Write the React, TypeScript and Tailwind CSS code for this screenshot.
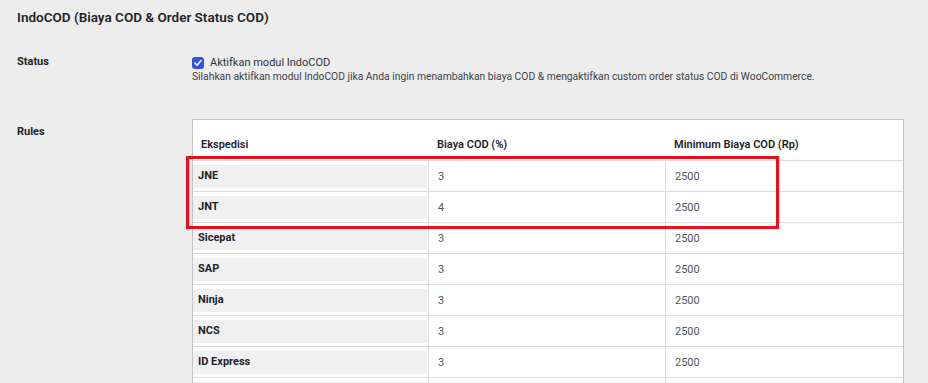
import React from "react";

const rows: [string, string, string][] = [
  ["JNE", "3", "2500"],
  ["JNT", "4", "2500"],
  ["Sicepat", "3", "2500"],
  ["SAP", "3", "2500"],
  ["Ninja", "3", "2500"],
  ["NCS", "3", "2500"],
  ["ID Express", "3", "2500"],
  ["", "", ""],
];

export default function App() {
  return (
    <div
      className="relative w-[928px] h-[383px] overflow-hidden bg-[#ededed] text-[#1d2327] pl-[17px] pt-[7px]"
      style={{ fontFamily: "Roboto, 'Noto Sans', sans-serif" }}
    >
      <h2 className="text-[13.5px] leading-[20px] font-semibold whitespace-nowrap">
        IndoCOD (Biaya COD &amp; Order Status COD)
      </h2>

      <div className="flex mt-[27px]">
        <div className="w-[175px] shrink-0 text-[11px] leading-[16px] font-bold">Status</div>
        <div>
          <label className="flex items-center h-[18px] gap-[6px] text-[11px] whitespace-nowrap">
            <span className="w-[12px] h-[12px] rounded-[3px] bg-[#3550e6] flex items-center justify-center">
              <svg width="10" height="10" viewBox="0 0 10 10">
                <path d="M2 5.2 L4.1 7.3 L8 2.6" fill="none" stroke="#fff" strokeWidth="1.6" strokeLinecap="round" strokeLinejoin="round" />
              </svg>
            </span>
            <span className="text-[#2c3338]">Aktifkan modul IndoCOD</span>
          </label>
          <p className="mt-[-2px] text-[10.3px] leading-[14px] text-[#3c434a] whitespace-nowrap">
            Silahkan aktifkan modul IndoCOD jika Anda ingin menambahkan biaya COD &amp; mengaktifkan custom order status COD di WooCommerce.
          </p>
        </div>
      </div>

      <div className="flex mt-[35px]">
        <div className="w-[175px] shrink-0 pt-[5px] text-[11px] leading-[16px] font-bold">Rules</div>
        <div className="w-[712px] border border-[#c3c4c7] bg-white">
          <div className="flex h-[41px] border-b border-[#dcdcde] text-[11px] leading-[16px] font-semibold items-end pb-[7px]">
            <div className="w-[235px] pl-[8px]">Ekspedisi</div>
            <div className="w-[237px] pl-[9px]">Biaya COD (%)</div>
            <div className="flex-1 pl-[9px]">Minimum Biaya COD (Rp)</div>
          </div>
          {rows.map(([name, pct, min], i) => (
            <div key={i} className="flex h-[31px] border-b border-[#dcdcde] text-[11px]">
              <div className="w-[235px] pt-[4px]">
                <div className="h-[23px] mr-[1px] bg-[#f0f0f0] pl-[5px] flex items-center font-bold text-[#1d2327]">
                  {name}
                </div>
              </div>
              <div className="w-[237px] border-l border-[#dcdcde] pl-[9px] pt-[2px] flex items-center text-[#50575e]">{pct}</div>
              <div className="flex-1 border-l border-[#dcdcde] pl-[9px] pt-[2px] flex items-center text-[#50575e]">{min}</div>
            </div>
          ))}
        </div>
      </div>

      <div className="absolute left-[186px] top-[156px] w-[593px] h-[73px] border-[3px] border-[#e8101a]" />
    </div>
  );
}
